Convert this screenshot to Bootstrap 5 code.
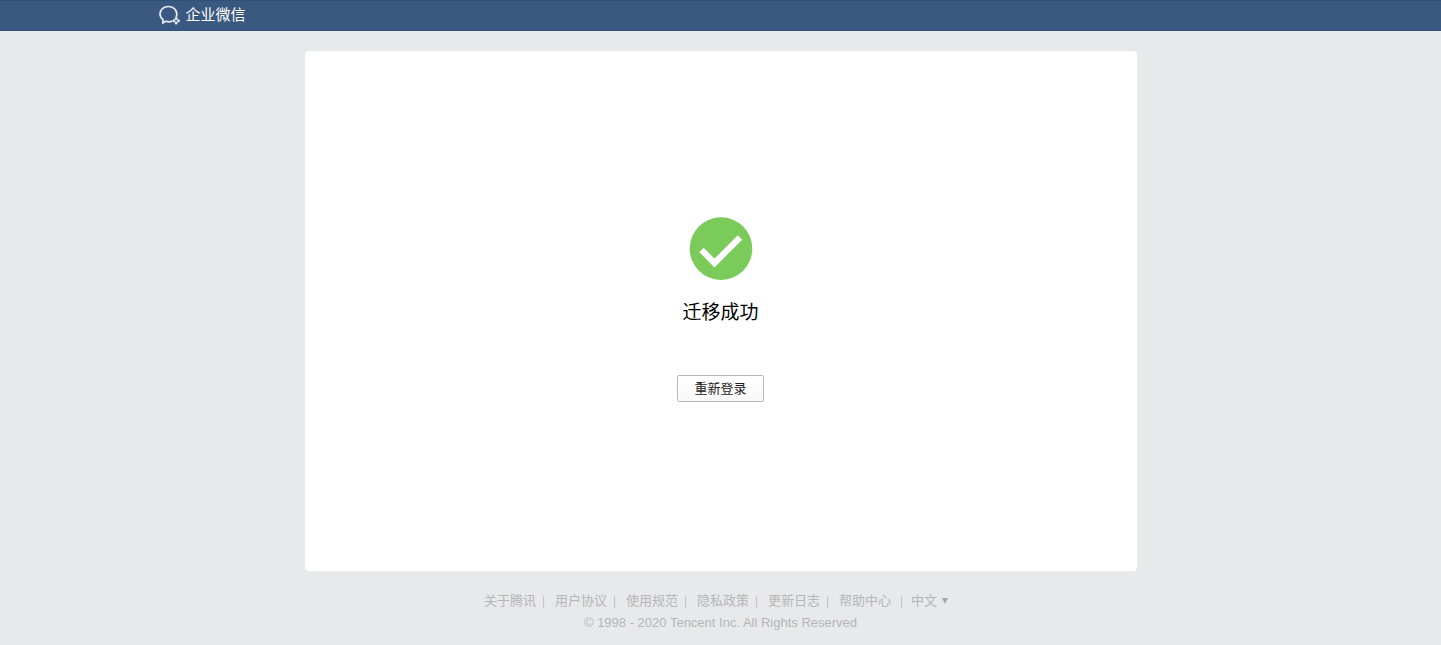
<!DOCTYPE html>
<html lang="zh-CN">
<head>
<meta charset="utf-8">
<meta name="viewport" content="width=device-width, initial-scale=1">
<title>企业微信</title>
<link href="https://cdn.jsdelivr.net/npm/bootstrap@5.3.0/dist/css/bootstrap.min.css" rel="stylesheet">
<style>
  body {
    background: #e8e9eb;
    color: #000;
    font-family: "Liberation Sans", "Noto Sans CJK SC", sans-serif;
    font-size: 13px;
    line-height: 22px;
  }
  .topbar {
    background: #3b5980;
    border-top: 1px solid #2f507a;
    border-bottom: 1px solid #2f507a;
    padding-bottom: 1px;
  }
  .page-width { max-width: 1124px; }
  .brand-link { color: #fff; font-size: 15px; line-height: 28px; gap: 5px; }
  .result-panel { max-width: 832px; min-height: 520px; border-radius: 4px; margin-top: 20px; padding-bottom: 4px; }
  .result-title { font-size: 19px; line-height: 28px; margin: 18px 0 48px; }
  .btn-login {
    --bs-btn-color: #222;
    --bs-btn-hover-color: #000;
    --bs-btn-border-color: #b8b8b8;
    --bs-btn-hover-border-color: #999;
    --bs-btn-border-radius: 2px;
    --bs-btn-font-size: 13px;
    --bs-btn-padding-x: 16px;
    --bs-btn-padding-y: 2px;
    line-height: 21px;
    background: linear-gradient(#fff, #f8f8f8);
  }
  .site-footer { color: #b5b6b7; padding-top: 19px; }
  .site-footer a { color: inherit; }
  .foot-links li::after { content: "|"; font-family: "Noto Sans CJK SC", sans-serif; font-size: 11px; line-height: 20px; margin: 0 10px 0 6px; }
  .foot-links li:nth-last-child(2)::after { margin: 0 8px 0 9px; }
  .foot-links li:last-child::after { content: none; }
  .lang-select { appearance: none; background: none; border: 0; padding: 0; color: inherit; width: 26px; }
</style>
</head>
<body>
<header class="topbar">
  <div class="page-width mx-auto d-flex">
    <a class="brand-link d-flex align-items-center text-decoration-none" href="#">
      <svg width="22" height="20" viewBox="0 0 22 20" fill="none" aria-hidden="true">
        <path d="M12.6 16.4C10.8 16.9 8.8 16.9 7.1 16.3L3.8 18L4.1 14.7C2.1 13.2 1 11.2 1 9C1 4.8 4.8 1.5 9.4 1.5C14.1 1.5 17.8 4.8 17.8 9C17.8 10 17.7 10.8 17.3 11.7" stroke="#e6ecf4" stroke-width="1.7" stroke-linecap="round" stroke-linejoin="round"/>
        <g fill="#e6ecf4"><circle cx="17.2" cy="13.4" r="1.5"/><circle cx="19.5" cy="15.7" r="1.5"/><circle cx="17.2" cy="18" r="1.5"/><circle cx="14.9" cy="15.7" r="1.5"/></g>
      </svg>
      <span>企业微信</span>
    </a>
  </div>
</header>

<main class="result-panel bg-white mx-auto d-flex flex-column align-items-center justify-content-center">
  <svg width="64" height="64" viewBox="0 0 64 64" aria-hidden="true">
    <circle cx="32" cy="31.6" r="31.3" fill="#7acb59"/>
    <path d="M12.5 33L25.5 46L51 20.5" fill="none" stroke="#fff" stroke-width="6.2"/>
  </svg>
  <h1 class="result-title fw-normal">迁移成功</h1>
  <button type="button" class="btn btn-login">重新登录</button>
</main>

<footer class="site-footer text-center">
  <ul class="foot-links list-unstyled d-flex flex-wrap justify-content-center mb-0">
    <li><a class="text-decoration-none" href="#">关于腾讯</a></li>
    <li><a class="text-decoration-none" href="#">用户协议</a></li>
    <li><a class="text-decoration-none" href="#">使用规范</a></li>
    <li><a class="text-decoration-none" href="#">隐私政策</a></li>
    <li><a class="text-decoration-none" href="#">更新日志</a></li>
    <li><a class="text-decoration-none" href="#">帮助中心</a></li>
    <li class="d-flex align-items-center">
      <select class="lang-select" aria-label="语言"><option>中文</option><option>English</option></select>
      <svg class="ms-1 me-2" width="8" height="8" viewBox="0 0 8 8" aria-hidden="true"><path d="M1 1H7L4 7Z" fill="#a5a6a7"/></svg>
    </li>
  </ul>
  <p class="mb-0">© 1998 - 2020 Tencent Inc. All Rights Reserved</p>
</footer>
<script src="https://cdn.jsdelivr.net/npm/bootstrap@5.3.0/dist/js/bootstrap.bundle.min.js"></script>
</body>
</html>
